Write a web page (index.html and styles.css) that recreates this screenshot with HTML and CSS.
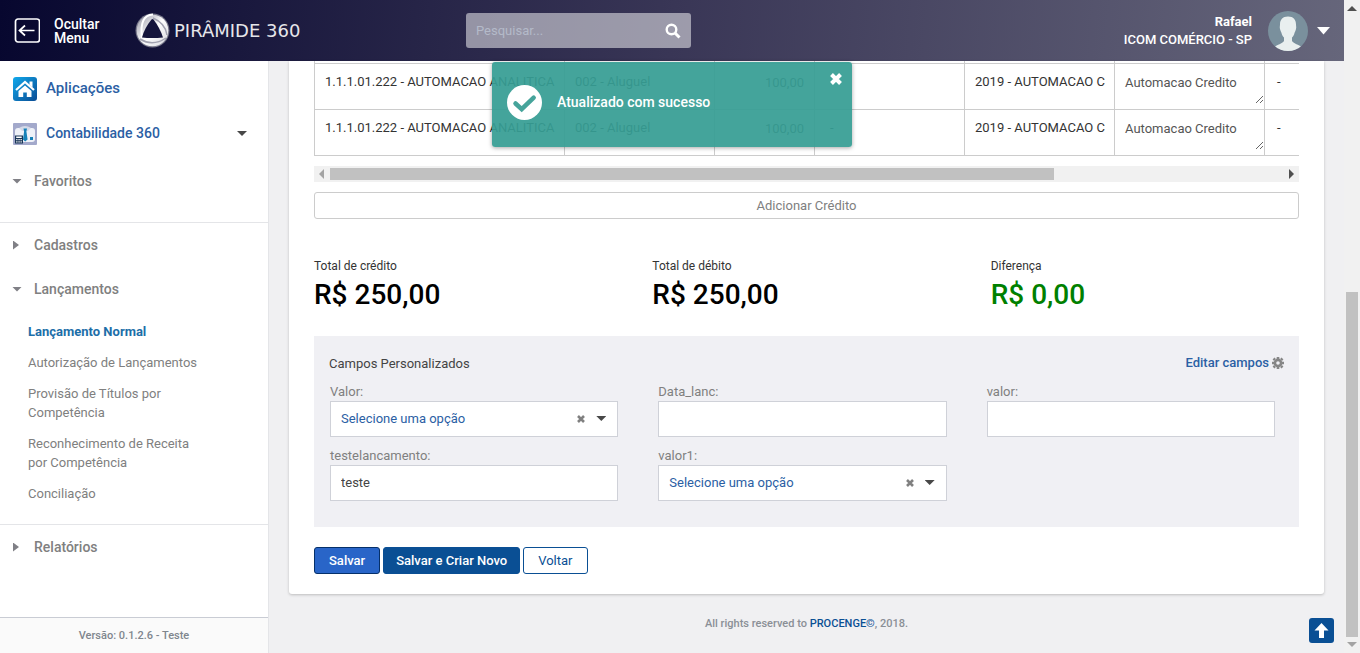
FILE: index.html
```html
<!DOCTYPE html>
<html lang="pt-BR">
<head>
<meta charset="utf-8">
<title>Pirâmide 360</title>
<link rel="stylesheet" href="styles.css">
</head>
<body>
<div class="shell">
  <div class="app">
    <header class="topbar">
      <button class="toggle" type="button">
        <svg width="26" height="26" viewBox="0 0 26 26" fill="none" stroke="#fff" stroke-width="1.7"><rect x="1.500" y="1" width="24" height="23" rx="2.500"/><path d="M20.500 12.500H5.500M11 7.500L5.500 12.500L11 17.500"/></svg>
        <span>Ocultar<br>Menu</span>
      </button>
      <a class="brand" href="#">
        <svg width="35" height="35" viewBox="0 0 35 35">
          <defs>
            <linearGradient id="ringA" x1="0" y1="0" x2="1" y2="1"><stop offset="0" stop-color="#8f8f9e"/><stop offset=".5" stop-color="#fff"/><stop offset="1" stop-color="#d5d5dc"/></linearGradient>
          </defs>
          <circle cx="17.500" cy="17.500" r="17" fill="#77778a"/>
          <circle cx="17.500" cy="17.500" r="15.800" fill="url(#ringA)"/>
          <path d="M18 1.500C9 2 5 9 7 25" fill="none" stroke="#fff" stroke-width="2"/>
          <path d="M18 5C25 8 31 14 32 22" fill="none" stroke="#a2a2b0" stroke-width="1.500"/>
          <path d="M5 26C13 31 22 31 31 25" fill="none" stroke="#a2a2b0" stroke-width="1.500"/>
          <path d="M16.500 6.500Q17.500 5.500 18.500 6.500Q25 15 28 24.500Q17 25.500 7 24.500Q9.500 15 16.500 6.500Z" fill="#14143b"/>
        </svg>
        <span>PIRÂMIDE 360</span>
      </a>
      <form class="search">
        <input type="search" placeholder="Pesquisar..." aria-label="Pesquisar">
        <button type="button" aria-label="Buscar"><svg width="16" height="16" viewBox="0 0 16 16" fill="none" stroke="#fff" stroke-width="2.400"><circle cx="6.500" cy="6.500" r="4.800"/><path d="M10 10L14.500 14.500" stroke-width="3"/></svg></button>
      </form>
      <button class="user" type="button">
        <span class="who"><b>Rafael</b><span>ICOM COMÉRCIO - SP</span></span>
        <svg width="40" height="40" viewBox="0 0 40 40"><defs><clipPath id="av"><circle cx="20" cy="20" r="20"/></clipPath></defs><g clip-path="url(#av)"><path fill="#7a909d" d="M0 0h40v40H0z"/><path fill="#e9efef" d="M20 5.500C14.500 5.500 12 9 12 13.500C12 15 11.500 16 12 18C12.500 20 13 20.500 13.500 22C14 24 15 25.500 16 26.500V30C14 33 9.500 33.500 6 36V41H34V36C30.500 33.500 26 33 24 30V26.500C25 25.500 26 24 26.500 22C27 20.500 27.500 20 28 18C28.500 16 28 15 28 13.500C28 9 25.500 5.500 20 5.500Z"/></g></svg>
        <svg width="13" height="8" viewBox="0 0 13 8"><path fill="#fff" d="M0 0h13L6.500 7.500z"/></svg>
      </button>
    </header>

    <div class="body">
      <nav class="sidebar">
        <div class="apps">
          <a class="app-link large" href="#">
            <svg width="24" height="24" viewBox="0 0 24 24"><defs><linearGradient id="hm" x1="0" y1="0" x2="1" y2="1"><stop offset="0" stop-color="#11a9ec"/><stop offset="1" stop-color="#0a4c94"/></linearGradient></defs><rect width="24" height="24" rx="3" fill="url(#hm)"/><path d="M3 13L12 5L21 13" fill="none" stroke="#fff" stroke-width="2.200"/><path fill="#fff" d="M16.500 4.500H19.500V10.500L16.500 8zM5.500 14L12 8.600L18.500 14V20H13.800V15.500H10.200V20H5.500z"/></svg>
            <span>Aplicações</span>
          </a>
          <a class="app-link" href="#">
            <svg width="24" height="22" viewBox="0 0 24 22"><rect width="24" height="22" rx="1" fill="#a3a9cb"/><rect x="2" y="5" width="20" height="14" rx="3" fill="#eef1f8"/><path fill="#d4dae8" d="M6 5Q12 1 18 5L15 8H9z"/><path fill="#1681b8" d="M10.500 5.500h3.500l-.6 3 1.200 8-2.400 2-2.200-2 1.100-8zM17 14h3v3h-3z"/><path fill="#173456" d="M2 12.500h8v8H2z"/><path fill="#fff" d="M3.200 13.500h5.500v1.400H3.200zM3.200 16h1.300v1.200H3.200zM5.400 16h1.300v1.200H5.400zM7.500 16h1.300v1.200H7.500zM3.200 18.300h1.300v1.200H3.200zM5.400 18.300h1.300v1.200H5.400zM7.500 18.300h1.300v1.200H7.500z"/></svg>
            <span>Contabilidade 360</span>
            <i class="caret-down dark"></i>
          </a>
        </div>
        <div class="group favorites"><button type="button"><i class="caret-down"></i>Favoritos</button></div>
        <div class="group">
          <button type="button"><i class="caret-right"></i>Cadastros</button>
          <button type="button"><i class="caret-down"></i>Lançamentos</button>
          <ul>
            <li><a class="active" href="#">Lançamento Normal</a></li>
            <li><a href="#">Autorização de Lançamentos</a></li>
            <li><a href="#">Provisão de Títulos por Competência</a></li>
            <li><a href="#">Reconhecimento de Receita por Competência</a></li>
            <li><a href="#">Conciliação</a></li>
          </ul>
        </div>
        <div class="group last"><button type="button"><i class="caret-right"></i>Relatórios</button></div>
        <div class="version">Versão: 0.1.2.6 - Teste</div>
      </nav>

      <main class="main">
        <section class="card">
          <div class="table-wrap">
            <table class="entries">
              <colgroup><col class="c250"><col class="c150"><col class="c100"><col class="c150"><col class="c150"><col class="c150"><col class="c150"></colgroup>
              <tbody>
                <tr class="edge"><td></td><td></td><td></td><td></td><td></td><td></td><td></td></tr>
                <tr><td>1.1.1.01.222 - AUTOMACAO ANALITICA</td><td>002 - Aluguel</td><td><input value="100,00" aria-label="Valor do crédito"></td><td>-</td><td>2019 - AUTOMACAO C</td><td class="note"><textarea aria-label="Histórico">Automacao Credito</textarea></td><td>-</td></tr>
                <tr><td>1.1.1.01.222 - AUTOMACAO ANALITICA</td><td>002 - Aluguel</td><td><input value="100,00" aria-label="Valor do crédito"></td><td>-</td><td>2019 - AUTOMACAO C</td><td class="note"><textarea aria-label="Histórico">Automacao Credito</textarea></td><td>-</td></tr>
              </tbody>
            </table>
          </div>
          <div class="hscroll"><i class="arrow left"></i><div class="track"><div class="thumb"></div></div><i class="arrow right"></i></div>
          <button class="add" type="button">Adicionar Crédito</button>

          <div class="totals">
            <div><span>Total de crédito</span><strong>R$ 250,00</strong></div>
            <div><span>Total de débito</span><strong>R$ 250,00</strong></div>
            <div><span>Diferença</span><strong class="ok">R$ 0,00</strong></div>
          </div>

          <section class="custom">
            <div class="custom-head">
              <h2>Campos Personalizados</h2>
              <a href="#">Editar campos <svg width="12" height="12" viewBox="0 0 12 12"><g fill="none" stroke="#868686" stroke-width="2.600"><circle cx="6" cy="6" r="3.100"/><path d="M6 0v2M6 10v2M0 6h2M10 6h2M1.500 1.500l1.500 1.500M9 9l1.500 1.500M10.500 1.500L9 3M3 9L1.500 10.500"/></g></svg></a>
            </div>
            <div class="fields">
              <div class="field"><label for="f1">Valor:</label><div class="select"><select id="f1"><option>Selecione uma opção</option></select><button type="button" aria-label="Limpar"><svg width="8" height="8" viewBox="0 0 8 8"><path stroke="#808080" stroke-width="2.600" d="M1 1L7 7M7 1L1 7"/></svg></button><i class="caret-down dark"></i></div></div>
              <div class="field"><label for="f2">Data_lanc:</label><input id="f2" type="text"></div>
              <div class="field"><label for="f3">valor:</label><input id="f3" type="text"></div>
              <div class="field"><label for="f4">testelancamento:</label><input id="f4" type="text" value="teste"></div>
              <div class="field"><label for="f5">valor1:</label><div class="select"><select id="f5"><option>Selecione uma opção</option></select><button type="button" aria-label="Limpar"><svg width="8" height="8" viewBox="0 0 8 8"><path stroke="#808080" stroke-width="2.600" d="M1 1L7 7M7 1L1 7"/></svg></button><i class="caret-down dark"></i></div></div>
            </div>
          </section>

          <div class="actions">
            <button class="btn save" type="button">Salvar</button>
            <button class="btn primary" type="button">Salvar e Criar Novo</button>
            <button class="btn" type="button">Voltar</button>
          </div>
        </section>
        <footer class="footer">All rights reserved to <a href="#">PROCENGE©</a>, 2018.</footer>
      </main>
    </div>
  </div>

  <div class="vscroll"><i class="arrow up"></i><div class="track"><div class="thumb"></div></div><i class="arrow down"></i></div>

  <div class="toast" role="status">
    <svg width="35" height="35" viewBox="0 0 35 35"><circle cx="17.500" cy="17.500" r="17.500" fill="#fff"/><path d="M8.500 18.500L14.700 24.200L26.700 12.700" fill="none" stroke="#46a49b" stroke-width="4.500" stroke-linecap="round"/></svg>
    <span>Atualizado com sucesso</span>
    <button type="button" aria-label="Fechar"><svg width="12" height="12" viewBox="0 0 12 12"><path stroke="#fff" stroke-width="4" d="M1.500 1.500L10.500 10.500M10.500 1.500L1.500 10.500"/></svg></button>
  </div>
  <button class="to-top" type="button" aria-label="Voltar ao topo"><svg width="15" height="15" viewBox="0 0 15 15"><path fill="#fff" d="M7.500 0L14.500 7.500H10V15H5V7.500H.5z"/></svg></button>
</div>
</body>
</html>
```
FILE: styles.css
```css
* { box-sizing: border-box; }
body { margin: 0; font-family: Roboto, "Liberation Sans", sans-serif; font-size: 13px; line-height: 19px; color: #333; background: #f0f0f2; }
button, input, select, textarea { font: inherit; color: inherit; margin: 0; }
button { padding: 0; border: 0; background: none; cursor: pointer; }
a { text-decoration: none; color: #2b60a4; }
svg { display: block; flex: none; }

.shell { position: relative; display: flex; min-height: 100vh; }
.app { flex: 1; min-width: 0; display: flex; flex-direction: column; }
.body { flex: 1; display: flex; }

.topbar { height: 61px; display: flex; align-items: center; color: #fff; padding: 0 14px; background: linear-gradient(95deg, #07072f, #393656 50%, #66667b); }
.toggle { display: flex; align-items: center; gap: 14px; width: 121px; text-align: left; font-size: 14px; font-weight: 500; line-height: 14px; }
.brand { display: flex; align-items: center; gap: 4px; width: 331px; color: #e6e6ea; font: 18px "DejaVu Sans", sans-serif; }
.search { display: flex; align-items: center; width: 225px; height: 35px; padding: 0 10px; border-radius: 3px; background: rgba(255, 255, 255, .5); }
.search input { flex: 1; min-width: 0; padding: 0; border: 0; outline: 0; background: none; }
.search input::placeholder { color: #b4bac9; }
.user { margin-left: auto; display: flex; align-items: center; }
.who { display: flex; flex-direction: column; text-align: right; font-weight: 500; line-height: 18px; margin-right: 16px; }
.who b { font-weight: 700; }
.user svg + svg { margin-left: 9px; }

.sidebar { width: 269px; flex: none; display: flex; flex-direction: column; background: #fff; border-right: 1px solid #e4e5e8; }
.apps { padding: 5px 0 3px; }
.app-link { display: flex; align-items: center; gap: 9px; height: 45px; padding: 0 21px 0 13px; font-size: 14px; font-weight: 500; }
.app-link.large { font-size: 15px; }
.app-link .caret-down { margin-left: auto; }
.caret-down { width: 10px; height: 5px; background: #808086; clip-path: polygon(0 0, 100% 0, 50% 100%); }
.caret-down.dark { background: #484848; }
.caret-right { width: 6px; height: 9px; margin-left: 1px; background: #808086; clip-path: polygon(0 0, 100% 50%, 0 100%); }
.group { border-bottom: 1px solid #e4e5e8; }
.group.favorites { padding-bottom: 19px; }
.group.last { border: 0; flex: 1; }
.group button { display: grid; grid-template-columns: 22px 1fr; align-items: center; width: 100%; height: 44px; padding-left: 12px; text-align: left; font-size: 14px; font-weight: 500; color: #808080; }
.group ul { list-style: none; margin: 0; padding: 5px 60px 15px 28px; }
.group li { padding: 6px 0; }
.group li a { display: block; color: #808080; }
.group li a.active { color: #1c6ea8; font-weight: 700; }
.version { height: 36px; border-top: 1px solid #c9ccd4; background: #fafafa; text-align: center; font-size: 11px; font-weight: 500; line-height: 36px; color: #7f868e; }

.main { flex: 1; min-width: 0; padding: 0 20px; }
.card { background: #fff; padding: 0 25px 20px; border-radius: 0 0 3px 3px; box-shadow: 0 1px 3px rgba(0, 0, 0, .22); }
.table-wrap { overflow: hidden; }
.entries { width: 1101px; table-layout: fixed; border-collapse: separate; border-spacing: 0; border-left: 1px solid #ccc; }
.c250 { width: 250px; }
.c150 { width: 150px; }
.c100 { width: 100px; }
.entries td { height: 46px; padding: 8px 10px; vertical-align: top; white-space: nowrap; overflow: hidden; border-right: 1px solid #ccc; border-bottom: 1px solid #ccc; }
.entries .edge td { height: 3px; padding: 0; }
.entries td:nth-child(4) { padding-left: 15px; }
.entries td:last-child { padding-left: 12px; }
.entries input { display: block; width: 100%; height: 21px; padding: 0; border: 0; background: none; text-align: right; color: #444; }
.entries .note { padding: 0; }
.entries textarea { display: block; width: 100%; height: 40px; padding: 9px 10px 0; border: 0; background: none; color: #555; overflow: hidden; }

.arrow { flex: none; background: #505050; }
.arrow.left { width: 5px; height: 10px; background: #a3a3a3; clip-path: polygon(0 50%, 100% 0, 100% 100%); }
.arrow.right { width: 5px; height: 10px; clip-path: polygon(0 0, 100% 50%, 0 100%); }
.arrow.up { width: 10px; height: 5px; clip-path: polygon(50% 0, 100% 100%, 0 100%); }
.arrow.down { width: 10px; height: 5px; background: #a3a3a3; clip-path: polygon(0 0, 100% 0, 50% 100%); }
.track { flex: 1; display: flex; }
.thumb { background: #c1c1c1; }
.hscroll { display: flex; align-items: center; gap: 6px; height: 16px; padding: 0 5px; margin: 10px 0; background: #f1f1f1; }
.hscroll .track { height: 12px; }
.hscroll .thumb { width: 76%; }
.vscroll { width: 16px; display: flex; flex-direction: column; align-items: center; gap: 5px; padding: 6px; background: #f1f1f1; }
.vscroll .track { width: 12px; align-items: flex-end; }
.vscroll .thumb { width: 12px; height: 55.5%; }

.add { display: block; width: 100%; height: 27px; border: 1px solid #ccc; border-radius: 3px; color: #808080; }
.totals { display: grid; grid-template-columns: repeat(3, 1fr); gap: 30px; padding: 38px 0 23px; }
.totals span { display: block; font-size: 12px; }
.totals strong { display: block; font-size: 28px; font-weight: 500; line-height: 37px; color: #000; }
.totals .ok { color: #008000; }

.custom { background: #f0f0f4; padding: 16px 0 26px; }
.custom-head { display: flex; justify-content: space-between; padding: 0 15px; }
.custom-head h2 { margin: 0; padding-top: 2px; font-size: 13px; font-weight: 400; color: #444; }
.custom-head a { display: flex; align-items: center; gap: 3px; font-weight: 500; }
.fields { display: grid; grid-template-columns: repeat(3, 1fr); gap: 10px 40px; padding: 10px 24px 0 16px; }
.field label { display: block; line-height: 18px; color: #808080; }
.field input, .field select { display: block; width: 100%; height: 36px; padding: 0 10px 1px; border: 1px solid #cfd1d8; border-radius: 0; background: #fff; outline: 0; color: #444; }
.field select { appearance: none; color: #2b60a4; }
.select { position: relative; }
.select button { position: absolute; right: 33px; top: 14px; }
.select .caret-down { position: absolute; right: 12px; top: 15px; pointer-events: none; }

.actions { display: flex; gap: 3px; margin-top: 20px; }
.btn { height: 27px; padding: 0 14px; border: 1px solid #0a4f94; border-radius: 3px; background: #fff; color: #0a4f94; }
.btn.primary { padding: 0 12px; background: #0a4f94; color: #fff; font-weight: 500; }
.btn.save { background: #2965c8; border-color: #05306a; color: #fff; font-weight: 500; }
.footer { padding: 20px 0; text-align: center; font-size: 11px; font-weight: 500; color: #8a8f96; }
.footer a { color: #0a4f94; }

.toast { position: absolute; top: 62px; left: 50%; width: 360px; height: 85px; margin-left: -188px; padding: 0 15px 4px; display: flex; align-items: center; gap: 15px; border-radius: 3px; background: rgba(54, 157, 147, .93); color: #fff; font-size: 14px; font-weight: 500; box-shadow: 0 1px 4px rgba(0, 0, 0, .35); }
.toast button { position: absolute; top: 11px; right: 10px; }
.to-top { position: absolute; right: 26px; bottom: 10px; width: 25px; height: 25px; display: grid; place-items: center; border-radius: 3px; background: #0a4f94; }
```
